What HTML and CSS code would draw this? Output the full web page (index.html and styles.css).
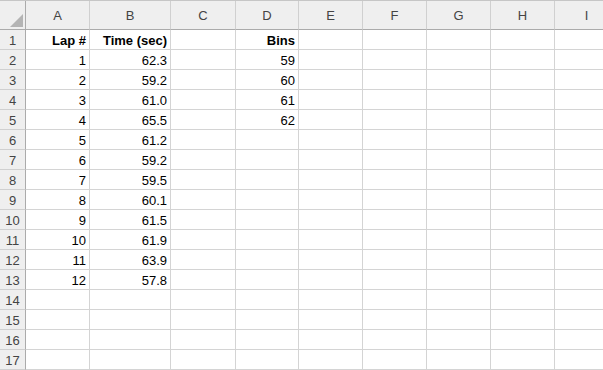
FILE: index.html
```html
<!DOCTYPE html>
<html lang="en">
<head>
  <meta charset="UTF-8" />
  <title>Lap times</title>
  <link rel="stylesheet" href="styles.css">
</head>
<body>
  <div class="sheet">
    <div class="hd corner"><span class="tri"></span></div>
    <div class="hd">A</div><div class="hd">B</div><div class="hd">C</div><div class="hd">D</div><div class="hd">E</div><div class="hd">F</div><div class="hd">G</div><div class="hd">H</div><div class="hd">I</div>

    <div class="rh">1</div><div class="c b">Lap #</div><div class="c b">Time (sec)</div><div class="c"></div><div class="c b">Bins</div><div class="c"></div><div class="c"></div><div class="c"></div><div class="c"></div><div class="c"></div>
    <div class="rh">2</div><div class="c">1</div><div class="c">62.3</div><div class="c"></div><div class="c">59</div><div class="c"></div><div class="c"></div><div class="c"></div><div class="c"></div><div class="c"></div>
    <div class="rh">3</div><div class="c">2</div><div class="c">59.2</div><div class="c"></div><div class="c">60</div><div class="c"></div><div class="c"></div><div class="c"></div><div class="c"></div><div class="c"></div>
    <div class="rh">4</div><div class="c">3</div><div class="c">61.0</div><div class="c"></div><div class="c">61</div><div class="c"></div><div class="c"></div><div class="c"></div><div class="c"></div><div class="c"></div>
    <div class="rh">5</div><div class="c">4</div><div class="c">65.5</div><div class="c"></div><div class="c">62</div><div class="c"></div><div class="c"></div><div class="c"></div><div class="c"></div><div class="c"></div>
    <div class="rh">6</div><div class="c">5</div><div class="c">61.2</div><div class="c"></div><div class="c"></div><div class="c"></div><div class="c"></div><div class="c"></div><div class="c"></div><div class="c"></div>
    <div class="rh">7</div><div class="c">6</div><div class="c">59.2</div><div class="c"></div><div class="c"></div><div class="c"></div><div class="c"></div><div class="c"></div><div class="c"></div><div class="c"></div>
    <div class="rh">8</div><div class="c">7</div><div class="c">59.5</div><div class="c"></div><div class="c"></div><div class="c"></div><div class="c"></div><div class="c"></div><div class="c"></div><div class="c"></div>
    <div class="rh">9</div><div class="c">8</div><div class="c">60.1</div><div class="c"></div><div class="c"></div><div class="c"></div><div class="c"></div><div class="c"></div><div class="c"></div><div class="c"></div>
    <div class="rh">10</div><div class="c">9</div><div class="c">61.5</div><div class="c"></div><div class="c"></div><div class="c"></div><div class="c"></div><div class="c"></div><div class="c"></div><div class="c"></div>
    <div class="rh">11</div><div class="c">10</div><div class="c">61.9</div><div class="c"></div><div class="c"></div><div class="c"></div><div class="c"></div><div class="c"></div><div class="c"></div><div class="c"></div>
    <div class="rh">12</div><div class="c">11</div><div class="c">63.9</div><div class="c"></div><div class="c"></div><div class="c"></div><div class="c"></div><div class="c"></div><div class="c"></div><div class="c"></div>
    <div class="rh">13</div><div class="c">12</div><div class="c">57.8</div><div class="c"></div><div class="c"></div><div class="c"></div><div class="c"></div><div class="c"></div><div class="c"></div><div class="c"></div>
    <div class="rh">14</div><div class="c"></div><div class="c"></div><div class="c"></div><div class="c"></div><div class="c"></div><div class="c"></div><div class="c"></div><div class="c"></div><div class="c"></div>
    <div class="rh">15</div><div class="c"></div><div class="c"></div><div class="c"></div><div class="c"></div><div class="c"></div><div class="c"></div><div class="c"></div><div class="c"></div><div class="c"></div>
    <div class="rh">16</div><div class="c"></div><div class="c"></div><div class="c"></div><div class="c"></div><div class="c"></div><div class="c"></div><div class="c"></div><div class="c"></div><div class="c"></div>
    <div class="rh">17</div><div class="c"></div><div class="c"></div><div class="c"></div><div class="c"></div><div class="c"></div><div class="c"></div><div class="c"></div><div class="c"></div><div class="c"></div>
  </div>
</body>
</html>
```

FILE: styles.css
```css
html, body {
  margin: 0;
  background: #fff;
  overflow: hidden;
}
body {
  font-family: 'Liberation Sans', Arial, sans-serif;
  font-size: 13px;
  color: #000;
  border-top: 1px solid #c6c6c6;
}
.sheet {
  display: grid;
  grid-template-columns: 26px 64px 81px 65px 63px 64px 64px 64px 64px 64px;
  grid-template-rows: 29px;
  grid-auto-rows: 20px;
  width: 619px;
}
.sheet > div {
  box-sizing: border-box;
  border-right: 1px solid #d4d4d4;
  border-bottom: 1px solid #d4d4d4;
  white-space: nowrap;
  overflow: hidden;
}
.hd {
  background: #efefef;
  color: #444;
  text-align: center;
  line-height: 20px;
  padding-top: 5px;
  border-bottom-color: #ababab !important;
  border-right-color: #d0d0d0 !important;
}
.corner {
  position: relative;
  border-right-color: #ababab !important;
}
.tri {
  position: absolute;
  right: 2px;
  bottom: 2px;
  width: 0;
  height: 0;
  border-left: 13px solid transparent;
  border-bottom: 13px solid #b4b4b4;
}
.rh {
  background: #efefef;
  color: #444;
  text-align: center;
  line-height: 19px;
  padding-top: 1px;
  border-right-color: #ababab !important;
  border-bottom-color: #d0d0d0 !important;
}
.c {
  text-align: right;
  line-height: 19px;
  padding: 1px 3px 0 0;
}
.b {
  font-weight: bold;
}
```
